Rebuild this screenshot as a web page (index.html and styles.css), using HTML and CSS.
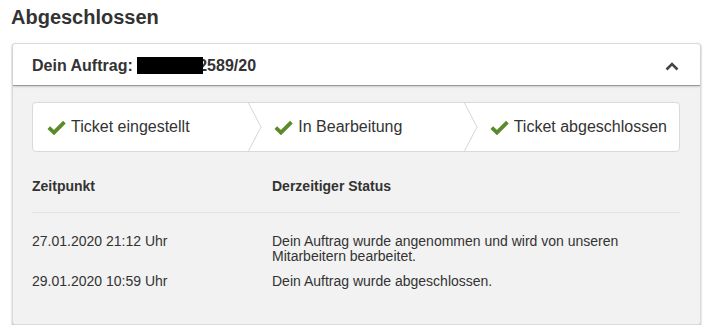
FILE: index.html
```html
<!DOCTYPE html>
<html lang="de">
<head>
    <meta charset="UTF-8">
    <meta name="viewport" content="width=device-width, initial-scale=1.0">
    <link rel="stylesheet" href="styles.css">
    <title>Abgeschlossen</title>
</head>
<body>
    <h1 class="title">Abgeschlossen</h1>

    <section class="panel">
        <header class="panel-head">
            <span class="order">Dein Auftrag: <span class="redacted"></span>2589/20</span>
            <svg class="caret" width="14" height="10" viewBox="0 0 14 10">
                <polyline points="1.5,8.5 7,3 12.5,8.5" fill="none" stroke="#444" stroke-width="2.6"/>
            </svg>
        </header>

        <div class="panel-body">
            <div class="steps">
                <div class="step">
                    <svg class="check" width="19" height="15" viewBox="0 0 19 15">
                        <polyline points="1.8,7.6 7,12.6 17.4,2.2" fill="none" stroke="#5b8a2b" stroke-width="3.8"/>
                    </svg>
                    <span>Ticket eingestellt</span>
                </div>
                <div class="step">
                    <svg class="sep" width="14" height="48" viewBox="0 0 14 48">
                        <polyline points="0.5,0 13,24 0.5,48" fill="none" stroke="#d6d6d6" stroke-width="1"/>
                    </svg>
                    <svg class="check" width="19" height="15" viewBox="0 0 19 15">
                        <polyline points="1.8,7.6 7,12.6 17.4,2.2" fill="none" stroke="#5b8a2b" stroke-width="3.8"/>
                    </svg>
                    <span>In Bearbeitung</span>
                </div>
                <div class="step">
                    <svg class="sep" width="14" height="48" viewBox="0 0 14 48">
                        <polyline points="0.5,0 13,24 0.5,48" fill="none" stroke="#d6d6d6" stroke-width="1"/>
                    </svg>
                    <svg class="check" width="19" height="15" viewBox="0 0 19 15">
                        <polyline points="1.8,7.6 7,12.6 17.4,2.2" fill="none" stroke="#5b8a2b" stroke-width="3.8"/>
                    </svg>
                    <span>Ticket abgeschlossen</span>
                </div>
            </div>

            <div class="history">
                <div class="row head">
                    <span>Zeitpunkt</span>
                    <span>Derzeitiger Status</span>
                </div>
                <div class="row first">
                    <span>27.01.2020 21:12 Uhr</span>
                    <span>Dein Auftrag wurde angenommen und wird von unseren Mitarbeitern bearbeitet.</span>
                </div>
                <div class="row">
                    <span>29.01.2020 10:59 Uhr</span>
                    <span>Dein Auftrag wurde abgeschlossen.</span>
                </div>
            </div>
        </div>
    </section>
</body>
</html>
```

FILE: styles.css
```css
* {
    box-sizing: border-box;
}

body {
    font-family: 'Liberation Sans', Arial, sans-serif;
    color: #333;
    background-color: #fff;
    margin: 0;
    padding: 0;
}

.title {
    font-size: 20px;
    line-height: 24px;
    margin: 0;
    padding: 5px 0 0 11px;
    color: #333;
}

.panel {
    width: 689px;
    margin: 14px 0 0 12px;
    background-color: #f2f2f2;
    border: 1px solid #dcdcdc;
    border-radius: 3px;
    box-shadow: 0 1px 2px rgba(0, 0, 0, 0.35);
}

.panel-head {
    display: flex;
    justify-content: space-between;
    align-items: center;
    background-color: #fff;
    padding: 12px 21px 9px 19px;
    border-bottom: 1px solid #9a9a9a;
    box-shadow: 0 1px 2px rgba(0, 0, 0, 0.15);
    border-radius: 3px 3px 0 0;
}

.order {
    font-size: 16px;
    font-weight: bold;
    line-height: 20px;
}

.redacted {
    position: relative;
    display: inline-block;
    width: 66px;
    height: 17px;
    margin-right: -5px;
    vertical-align: -3px;
    background-color: #000;
}

.caret {
    display: block;
}

.panel-body {
    padding: 16px 20px 35px 19px;
}

.steps {
    display: grid;
    grid-template-columns: repeat(3, 1fr);
    height: 50px;
    background-color: #fff;
    border: 1px solid #d9d9d9;
    border-radius: 4px;
}

.step {
    position: relative;
    display: flex;
    align-items: center;
    gap: 5px;
    padding-left: 26px;
    font-size: 16px;
    color: #333;
}

.step:first-child {
    padding-left: 14px;
}

.sep {
    position: absolute;
    left: 0;
    top: 0;
}

.check {
    display: block;
    flex: none;
}

.history {
    margin-top: 26px;
    font-size: 14px;
    line-height: 15px;
}

.row {
    display: grid;
    grid-template-columns: 240px 1fr;
    padding-top: 10px;
}

.row.head {
    padding-top: 0;
    padding-bottom: 18px;
    line-height: 16px;
    font-weight: bold;
    border-bottom: 1px solid #e2e2e2;
}

.row.first {
    padding-top: 21px;
}
```
